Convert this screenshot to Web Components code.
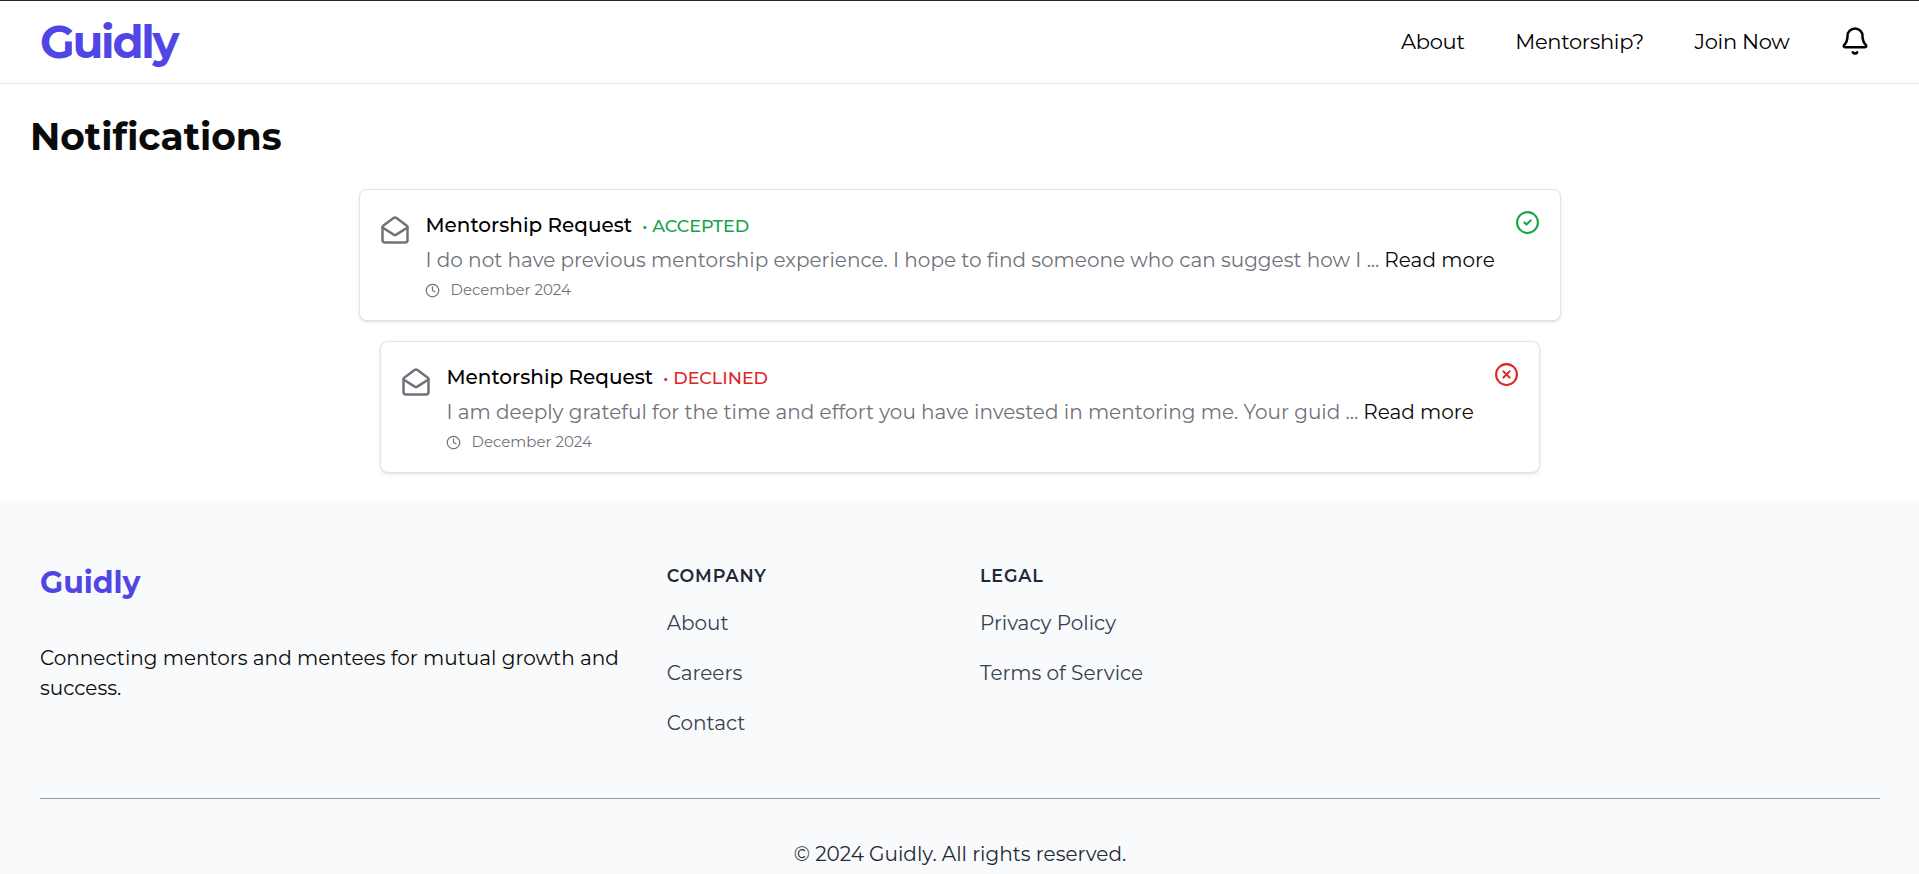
<!DOCTYPE html>
<html lang="en">
<head>
<meta charset="utf-8">
<title>Guidly - Notifications</title>
<style>
html,body{margin:0;background:#fff}
body{font-family:Montserrat,Inter,"Open Sans",sans-serif;font-size:20px;line-height:30px;color:#0a0a0a;overflow:hidden;height:874px}
</style>
</head>
<body>
<guidly-app></guidly-app>
<script>
const define = (name, html, setup) => customElements.define(name, class extends HTMLElement {
  connectedCallback() {
    if (this.shadowRoot) return;
    const t = document.createElement('template');
    t.innerHTML = html;
    this.attachShadow({mode: 'open'}).append(t.content.cloneNode(true));
    if (setup) setup(this, this.shadowRoot);
  }
});

const ICONS = {
  bell: '<path d="M10.268 21a2 2 0 0 0 3.464 0"/><path d="M3.262 15.326A1 1 0 0 0 4 17h16a1 1 0 0 0 .74-1.673C19.41 13.956 18 12.499 18 8A6 6 0 0 0 6 8c0 4.499-1.411 5.956-2.738 7.326"/>',
  mail: '<path d="M21.2 8.4c.5.38.8.97.8 1.6v10a2 2 0 0 1-2 2H4a2 2 0 0 1-2-2V10a2 2 0 0 1 .8-1.6l8-6a2 2 0 0 1 2.4 0l8 6Z"/><path d="m22 10-8.97 5.7a1.94 1.94 0 0 1-2.06 0L2 10"/>',
  clock: '<circle cx="12" cy="12" r="10"/><path d="M12 6v6l4 2"/>',
  check: '<circle cx="12" cy="12" r="10"/><path d="m9 12 2 2 4-4"/>',
  cross: '<circle cx="12" cy="12" r="10"/><path d="m15 9-6 6M9 9l6 6"/>'
};
define('ui-icon', `<style>
:host{display:block;flex:none}
svg{display:block;width:100%;height:100%;fill:none;stroke:currentColor;stroke-width:2;stroke-linecap:round;stroke-linejoin:round}
</style><svg viewBox="0 0 24 24"></svg>`, (el, root) => {
  root.querySelector('svg').innerHTML = ICONS[el.getAttribute('name')];
  el.style.width = el.style.height = el.getAttribute('size') + 'px';
});

define('site-header', `<style>
:host{display:flex;box-sizing:border-box;height:84px;border-top:1px solid #27272a;border-bottom:1px solid #e4e4e7;align-items:center;justify-content:space-between;padding:0 49px 0 40px}
.logo{font-size:45px;font-weight:700;color:#4f46e5;line-height:50px;letter-spacing:-2.25px}
nav{display:flex;align-items:center;gap:50.5px;font-size:21px;letter-spacing:-.3px;color:#000;margin-bottom:1px}
ui-icon{margin-top:-1px}
</style>
<span class="logo">Guidly</span>
<nav><span>About</span><span>Mentorship?</span><span>Join Now</span><ui-icon name="bell" size="30"></ui-icon></nav>`);

define('request-card', `<style>
:host{display:flex;box-sizing:border-box;height:132px;border:1px solid #e4e4e7;border-radius:8px;padding:20px;box-shadow:0 1px 3px rgba(0,0,0,.1),0 1px 2px -1px rgba(0,0,0,.1);background:#fff}
.mail{color:#71717a;margin:5px 15px 0 0}
.body{flex:1;display:flex;flex-direction:column;gap:5px;white-space:nowrap}
.row{display:flex;height:30px;align-items:center;padding-left:1px}
.title{font-weight:500;color:#000;align-items:baseline}
.status{font-size:17.5px;color:var(--status);margin-left:10px;font-weight:500}
.text{color:#71717a;gap:5px}
.more{color:#0a0a0a}
.date{height:20px;line-height:20px;font-size:15px;color:#71717a;padding-left:0}
.date ui-icon{margin-right:11px}
</style>
<ui-icon class="mail" name="mail" size="30"></ui-icon>
<div class="body">
<div class="row title"><slot name="title"></slot><span class="status">• <slot name="status"></slot></span></div>
<div class="row text"><slot name="message"></slot><span class="more">Read more</span></div>
<div class="row date"><ui-icon name="clock" size="15"></ui-icon><span>December 2024</span></div>
</div>
<slot name="icon"></slot>`, el => {
  el.style.setProperty('--status', el.getAttribute('state') === 'accepted' ? '#16a34a' : '#dc2626');
});

define('notification-list', `<style>
:host{display:block;box-sizing:border-box;height:419px;padding:30px 30px 0}
h1{margin:0;font-size:37.5px;line-height:45px;font-weight:700}
.list{display:flex;flex-direction:column;align-items:center;gap:20px;margin-top:30px}
.a{width:1202px}.b{width:1160px}
ui-icon{color:var(--status)}
</style>
<h1>Notifications</h1>
<div class="list">
<request-card class="a" state="accepted"><span slot="title">Mentorship Request</span><span slot="status">ACCEPTED</span><span slot="message">I do not have previous mentorship experience. I hope to find someone who can suggest how I ...</span><ui-icon slot="icon" name="check" size="25"></ui-icon></request-card>
<request-card class="b" state="declined"><span slot="title">Mentorship Request</span><span slot="status">DECLINED</span><span slot="message">I am deeply grateful for the time and effort you have invested in mentoring me. Your guid ...</span><ui-icon slot="icon" name="cross" size="25"></ui-icon></request-card>
</div>`);

define('site-footer', `<style>
:host{display:block;background:#f9fafb;box-sizing:border-box;height:371px;padding:60px 39px 0 40px}
.grid{display:grid;grid-template-columns:repeat(6,1fr);gap:40px;height:235px}
.brand{grid-column:span 2}
.logo{font-size:30px;font-weight:700;color:#4f46e5;line-height:40px;margin-bottom:40px}
.about{color:#0a0a0a}
h3{margin:0 0 20px;font-size:17.5px;line-height:25px;font-weight:600;color:#1f2937;letter-spacing:.875px}
.links{display:flex;flex-direction:column;gap:20px;color:#374151;white-space:nowrap}
.copy{border-top:1px solid #8b9ba5;height:75px;box-sizing:border-box;padding-top:40px;text-align:center;color:#1f2937}
</style>
<div class="grid">
<div class="brand"><div class="logo">Guidly</div><div class="about">Connecting mentors and mentees for mutual growth and success.</div></div>
<div><h3>COMPANY</h3><div class="links"><span>About</span><span>Careers</span><span>Contact</span></div></div>
<div><h3>LEGAL</h3><div class="links"><span>Privacy Policy</span><span>Terms of Service</span></div></div>
</div>
<div class="copy">© 2024 Guidly. All rights reserved.</div>`);

define('guidly-app', `<style>:host{display:block}</style><site-header></site-header><notification-list></notification-list><site-footer></site-footer>`);
</script>
</body>
</html>
